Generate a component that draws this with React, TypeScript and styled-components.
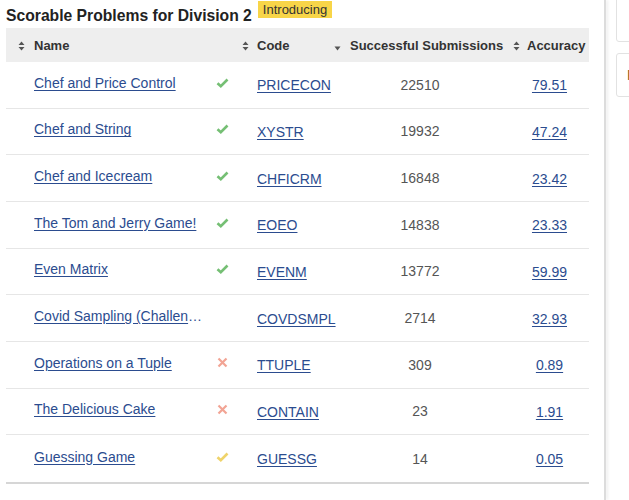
import React from "react";
import styled, { createGlobalStyle } from "styled-components";

const Global = createGlobalStyle`
  html, body { margin: 0; padding: 0; background: #fff; overflow: hidden; }
  body { font-family: "Liberation Sans", Arial, sans-serif; color: #333; }
`;

const Page = styled.div`
  display: flex;
  width: 629px;
  height: 500px;
  overflow: hidden;
`;

const Main = styled.div`
  width: 604px;
  flex: none;
  padding-left: 6px;
  box-sizing: border-box;
`;

const Divider = styled.div`
  width: 2px;
  flex: none;
  background: #dcdcdc;
  box-shadow: 2px 0 3px rgba(0, 0, 0, 0.08);
`;

const Side = styled.div`
  flex: 1;
  padding-left: 10px;
  display: flex;
  flex-direction: column;
  gap: 11px;
  margin-top: -6px;
`;

const SideBox = styled.div<{ $h: number }>`
  height: ${(p) => p.$h}px;
  border: 1px solid #e2e2e2;
  border-radius: 3px;
  width: 40px;
  box-sizing: border-box;
  display: flex;
  align-items: center;
  padding-left: 10px;
  overflow: hidden;
  font-size: 14px;
  color: #8a5a26;
  white-space: nowrap;
`;

const TitleRow = styled.div`
  display: flex;
  align-items: flex-start;
  height: 28px;
`;

const Title = styled.h2`
  margin: 0;
  font-size: 15.7px;
  font-weight: bold;
  color: #222;
  line-height: 18px;
  padding-top: 7px;
`;

const Badge = styled.span`
  margin-left: 6px;
  margin-top: 1px;
  background: #f8d548;
  color: #333;
  font-size: 13px;
  line-height: 17px;
  padding: 0 5px;
`;

const Table = styled.div`
  width: 583px;
  border-bottom: 2px solid #d6d6d6;
`;

const cols = "234px 90px 180px 79px";

const HeadRow = styled.div`
  display: grid;
  grid-template-columns: ${cols};
  height: 34px;
  padding-top: 1px;
  box-sizing: border-box;
  background: #eeeeee;
  align-items: center;
  font-size: 13px;
  font-weight: bold;
  color: #333;
`;

const HeadCell = styled.div<{ $pl: number; $gap: number }>`
  display: flex;
  align-items: center;
  padding-left: ${(p) => p.$pl}px;
  white-space: nowrap;
  gap: ${(p) => p.$gap}px;
`;

const Row = styled.div`
  display: grid;
  grid-template-columns: ${cols};
  height: 46.67px;
  box-sizing: border-box;
  border-bottom: 1px solid #e6e6e6;
  align-items: center;
  font-size: 14px;
  &:last-child { border-bottom: none; }
`;

const NameCell = styled.div`
  display: flex;
  align-items: center;
  padding-left: 28px;
  padding-bottom: 4px;
`;

const Link = styled.a`
  color: #2b4c8f;
  text-decoration: underline;
  text-underline-offset: 2px;
  cursor: pointer;
`;

const NameLink = styled(Link)`
  width: 171px;
  flex: none;
  overflow: hidden;
  text-overflow: ellipsis;
  white-space: nowrap;
`;

const IconSlot = styled.span`
  width: 14px;
  margin-left: 10px;
  display: flex;
  justify-content: center;
`;

const CodeCell = styled.div`
  padding-left: 17px;
  padding-top: 1px;
`;

const Num = styled.div`
  text-align: center;
  color: #555;
`;

const Acc = styled.div`
  text-align: center;
  padding-top: 1px;
`;

const SortIcon = () => (
  <svg width="7" height="10" viewBox="0 0 7 10">
    <path d="M3.5 0.5 L6.5 4 H0.5 Z M3.5 9.5 L6.5 6 H0.5 Z" fill="#555" />
  </svg>
);

const DownIcon = () => (
  <svg width="7" height="10" viewBox="0 0 7 10" style={{ marginTop: 4 }}>
    <path d="M0.5 3.5 H6.5 L3.5 7.5 Z" fill="#555" />
  </svg>
);

const Check = ({ color }: { color: string }) => (
  <svg width="13" height="10" viewBox="0 0 13 10">
    <path d="M1.5 5.2 L4.8 8.2 L11.5 1.5" fill="none" stroke={color} strokeWidth="2.6" />
  </svg>
);

const Cross = () => (
  <svg width="11" height="11" viewBox="0 0 11 11">
    <path d="M1.5 1.5 L9.5 9.5 M9.5 1.5 L1.5 9.5" fill="none" stroke="#f2a494" strokeWidth="2.2" />
  </svg>
);

type Status = "ok" | "wrong" | "partial" | "none";

const rows: { name: string; status: Status; code: string; subs: string; acc: string }[] = [
  { name: "Chef and Price Control", status: "ok", code: "PRICECON", subs: "22510", acc: "79.51" },
  { name: "Chef and String", status: "ok", code: "XYSTR", subs: "19932", acc: "47.24" },
  { name: "Chef and Icecream", status: "ok", code: "CHFICRM", subs: "16848", acc: "23.42" },
  { name: "The Tom and Jerry Game!", status: "ok", code: "EOEO", subs: "14838", acc: "23.33" },
  { name: "Even Matrix", status: "ok", code: "EVENM", subs: "13772", acc: "59.99" },
  { name: "Covid Sampling (Challenge)", status: "none", code: "COVDSMPL", subs: "2714", acc: "32.93" },
  { name: "Operations on a Tuple", status: "wrong", code: "TTUPLE", subs: "309", acc: "0.89" },
  { name: "The Delicious Cake", status: "wrong", code: "CONTAIN", subs: "23", acc: "1.91" },
  { name: "Guessing Game", status: "partial", code: "GUESSG", subs: "14", acc: "0.05" },
];

const StatusIcon = ({ s }: { s: Status }) => {
  if (s === "ok") return <Check color="#75bf74" />;
  if (s === "partial") return <Check color="#efd36a" />;
  if (s === "wrong") return <Cross />;
  return null;
};

export default function App() {
  return (
    <Page>
      <Global />
      <Main>
        <TitleRow>
          <Title>Scorable Problems for Division 2</Title>
          <Badge>Introducing</Badge>
        </TitleRow>
        <Table>
          <HeadRow>
            <HeadCell $pl={12} $gap={9}>
              <SortIcon />
              <span>Name</span>
            </HeadCell>
            <HeadCell $pl={2} $gap={8}>
              <SortIcon />
              <span>Code</span>
            </HeadCell>
            <HeadCell $pl={4} $gap={9}>
              <DownIcon />
              <span>Successful Submissions</span>
            </HeadCell>
            <HeadCell $pl={3} $gap={7}>
              <SortIcon />
              <span>Accuracy</span>
            </HeadCell>
          </HeadRow>
          {rows.map((r) => (
            <Row key={r.code}>
              <NameCell>
                <NameLink>{r.name}</NameLink>
                <IconSlot>
                  <StatusIcon s={r.status} />
                </IconSlot>
              </NameCell>
              <CodeCell>
                <Link>{r.code}</Link>
              </CodeCell>
              <Num>{r.subs}</Num>
              <Acc>
                <Link>{r.acc}</Link>
              </Acc>
            </Row>
          ))}
        </Table>
      </Main>
      <Divider />
      <Side>
        <SideBox $h={48} />
        <SideBox $h={44}>Rules</SideBox>
      </Side>
    </Page>
  );
}
